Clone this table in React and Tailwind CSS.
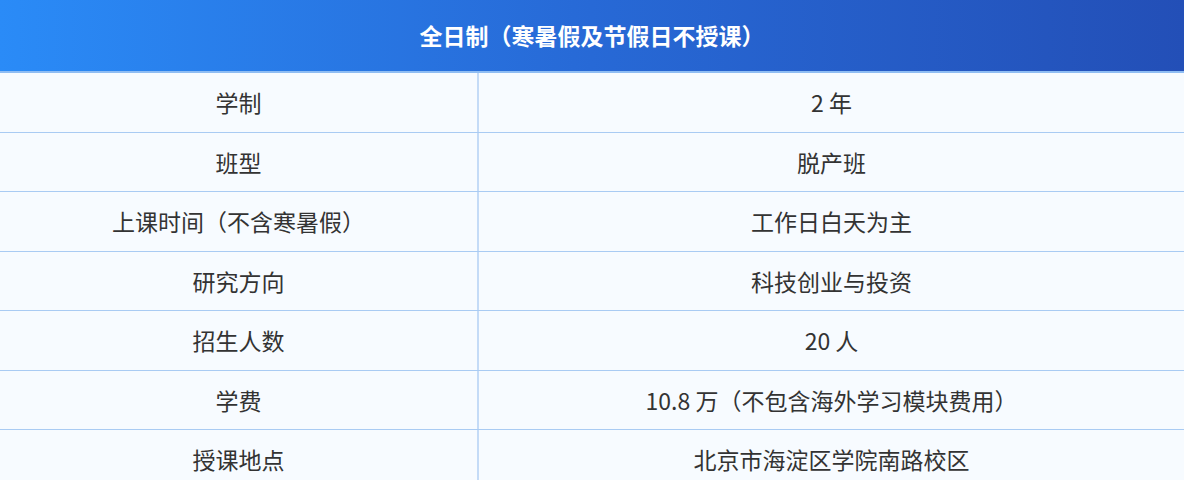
const rows = [
  ["学制", "2 年"],
  ["班型", "脱产班"],
  ["上课时间（不含寒暑假）", "工作日白天为主"],
  ["研究方向", "科技创业与投资"],
  ["招生人数", "20 人"],
  ["学费", "10.8 万（不包含海外学习模块费用）"],
  ["授课地点", "北京市海淀区学院南路校区"],
];

export default function App() {
  return (
    <div
      className="h-[480px] w-[1184px] overflow-hidden bg-[#f7fbff]"
      style={{ fontFamily: '"Noto Sans CJK SC", "Noto Sans", sans-serif' }}
    >
      {/* header */}
      <div className="flex h-[73px] items-center justify-center border-b-2 border-[#8fbdf3] bg-gradient-to-r from-[#2a8bf7] via-[#2769d6] to-[#234fb7]">
        <h2 className="text-[23px] font-bold text-white">
          全日制（寒暑假及节假日不授课）
        </h2>
      </div>

      {/* rows */}
      {rows.map(([label, value]) => (
        <div
          key={label}
          className="flex h-[59.5px] border-b border-[#a9cbf3] text-[23px] text-[#333333]"
        >
          <div className="flex w-[479px] shrink-0 items-center justify-center border-r-2 border-[#c4dbf7]">
            {label}
          </div>
          <div className="flex flex-1 items-center justify-center">{value}</div>
        </div>
      ))}
    </div>
  );
}
